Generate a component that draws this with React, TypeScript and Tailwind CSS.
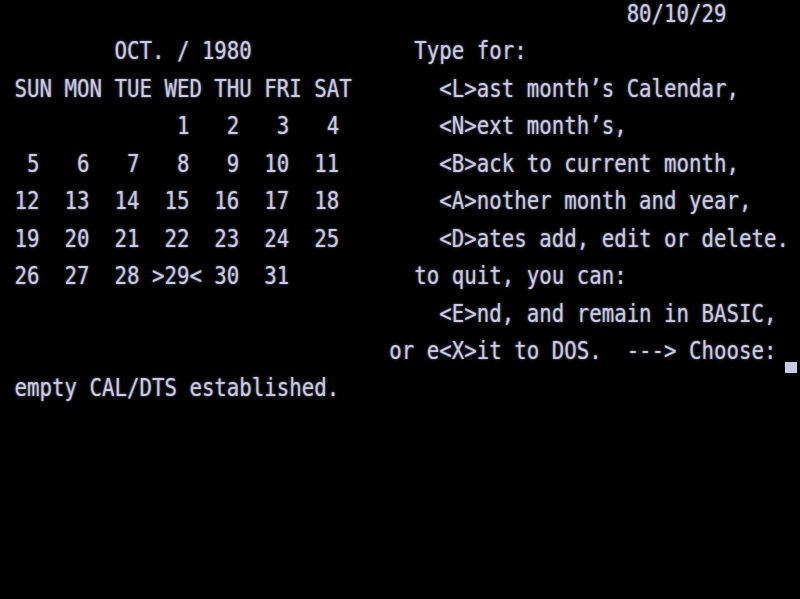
// build a text row from [column, text] pieces (64-col screen)
const row = (...parts: [number, string][]) => {
  let s = '';
  for (const [col, text] of parts) {
    s = s.padEnd(col, ' ') + text;
  }
  return s;
};

const lines: string[] = [
  row([50, '80/10/29']),
  row([9, 'OCT. / 1980'], [33, 'Type for:']),
  row([1, 'SUN MON TUE WED THU FRI SAT'], [35, '<L>ast month’s Calendar,']),
  row([13, ' 1   2   3   4'], [35, '<N>ext month’s,']),
  row([1, ' 5   6   7   8   9  10  11'], [35, '<B>ack to current month,']),
  row([1, '12  13  14  15  16  17  18'], [35, '<A>nother month and year,']),
  row([1, '19  20  21  22  23  24  25'], [35, '<D>ates add, edit or delete.']),
  row([1, '26  27  28 >29< 30  31'], [33, 'to quit, you can:']),
  row([35, '<E>nd, and remain in BASIC,']),
  row([31, 'or e<X>it to DOS.  ---> Choose:']),
  row([1, 'empty CAL/DTS established.']),
  '',
  '',
  '',
  '',
  '',
];

const Line = ({ text }: { text: string }) => (
  <span className="inline-block whitespace-pre leading-[22px] scale-y-[1.22] origin-top">
    {text}
  </span>
);

export default function App() {
  return (
    <div
      className="w-[800px] h-[599px] overflow-hidden bg-black pl-[2px] text-[#cacae4] text-[20.76px] [text-shadow:0_0_2px_rgba(200,200,235,0.7)]"
      style={{ fontFamily: '"DejaVu Sans Mono", "Liberation Mono", monospace' }}
    >
      {lines.map((text, i) => (
        <div key={i} className="flex h-[37.44px] items-start">
          <Line text={text} />
          {/* cursor */}
          {i === 9 && <div className="mt-[25px] ml-[8px] h-[11px] w-[12px] bg-[#cacae4]" />}
        </div>
      ))}
    </div>
  );
}
